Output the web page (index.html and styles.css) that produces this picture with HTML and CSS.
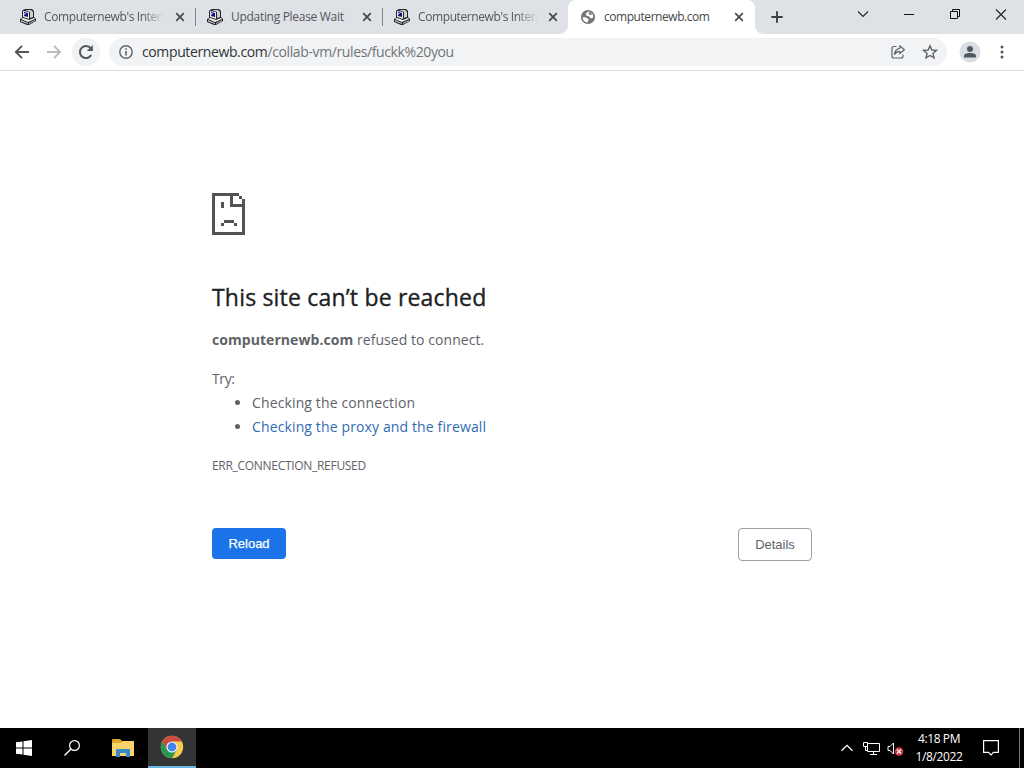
FILE: index.html
```html
<!DOCTYPE html>
<html lang="en">
<head>
<meta charset="utf-8">
<title>computernewb.com</title>
<link rel="stylesheet" href="styles.css">
</head>
<body>
<svg class="defs" aria-hidden="true">
  <symbol id="pc" viewBox="0 0 16 16">
    <path d="M3 1L5 0H12L14 2V8L16 10V12L9 16H7L0 13V10L2 9V2Z" fill="#24252c"/>
    <path d="M3 2L9 3V10L3 8Z" fill="#e9e9e6"/><path d="M4 3L8 4V8L4 7Z" fill="#16167d"/>
    <path d="M5 1H11L13 3V8L10 9V3Z" fill="#cfd0d2"/>
    <path d="M1 10L3 9L9 11L14 9L15 10L8 13Z" fill="#f4f4f0"/><path d="M1 11L8 14V15L1 12.500ZM9 14L15 11V12L9 15Z" fill="#c5c6ca"/>
    <path d="M4 4H6V5H5V6H4Z" fill="#8f91ee"/>
  </symbol>
  <symbol id="cross" viewBox="0 0 10 10"><path d="M1.200 1.200L8.800 8.800M8.800 1.200L1.200 8.800" fill="none" stroke="#45494d" stroke-width="1.700"/></symbol>
</svg>
<header class="tabs">
  <div class="tab"><svg class="fav"><use href="#pc"/></svg><span class="label fade t1">Computernewb's Intern</span><svg class="close"><use href="#cross"/></svg></div>
  <div class="tab"><svg class="fav"><use href="#pc"/></svg><span class="label t2">Updating Please Wait</span><svg class="close"><use href="#cross"/></svg></div>
  <div class="tab last"><svg class="fav"><use href="#pc"/></svg><span class="label fade t1">Computernewb's Intern</span><svg class="close"><use href="#cross"/></svg></div>
  <div class="tab active"><svg class="globe" viewBox="0 0 16 16"><circle cx="8" cy="8" r="7.100" fill="#76777a"/><path d="M2.600 8.200L5.500 8.200L8.700 10.300L7.500 13.400C4.500 13.200 2.600 11 2.600 8.200ZM8.600 2.500L5.800 4.500L6.400 6.700L9.300 7.400L10.500 9.500L13.300 8.500C13.500 5.400 11.500 2.900 8.600 2.500Z" fill="#fff"/><path d="M8.500 3.500L11 3L12 5.500L9.500 6Z" fill="#76777a"/></svg><span class="label t3">computernewb.com</span><svg class="close"><use href="#cross"/></svg></div>
  <svg class="plus" viewBox="0 0 12 12"><path d="M6 .3V11.700M.3 6H11.700" stroke="#3c4043" stroke-width="1.900"/></svg>
  <div class="window-buttons">
    <svg viewBox="0 0 46 29"><path d="M18 11.500L23 16.500L28 11.500" fill="none" stroke="#222" stroke-width="1.100"/></svg>
    <svg viewBox="0 0 46 29"><path d="M18 14.500H28" stroke="#111"/></svg>
    <svg viewBox="0 0 46 29"><path d="M18.500 11.500H25.500V18.500H18.500ZM20.500 11.500V9.500H27.500V16.500H25.500" fill="none" stroke="#111"/></svg>
    <svg viewBox="0 0 46 29"><path d="M18 9.500L28 19.500M28 9.500L18 19.500" stroke="#222" stroke-width="1.100"/></svg>
  </div>
</header>
<nav class="toolbar">
  <svg class="arrow back" viewBox="0 0 16 16"><path d="M15 8H2M8 1.800L1.800 8L8 14.200" fill="none" stroke="#54575b" stroke-width="1.900"/></svg>
  <svg class="arrow" viewBox="0 0 16 16"><path d="M1 8H14M8 1.800L14.200 8L8 14.200" fill="none" stroke="#babcbe" stroke-width="1.900"/></svg>
  <div class="reload"><svg viewBox="0 0 16 16"><path d="M13.200 11A6 6 0 1 1 12.600 4.200L14 5.600" fill="none" stroke="#54575b" stroke-width="2"/><path d="M14.800 1V7H8.800Z" fill="#54575b"/></svg></div>
  <div class="omnibox">
    <svg class="info" viewBox="0 0 16 16"><circle cx="8" cy="8" r="6.200" fill="none" stroke="#5f6368" stroke-width="1.400"/><path d="M8 7V11.500M8 4.200V5.800" stroke="#5f6368" stroke-width="1.600"/></svg>
    <span class="url"><b>computernewb.com</b>/collab-vm/rules/fuckk%20you</span>
    <svg class="share" viewBox="0 0 16 16"><path d="M6.500 2.500H4Q2 2.500 2 4.500V12Q2 14 4 14H11Q13 14 13 12V10.500" fill="none" stroke="#5f6368" stroke-width="1.200"/><path d="M9.800 1.800L14.400 5.700L9.800 9.500V7.300Q6.500 7.200 4.500 10.300Q5 5 9.800 4.300Z" fill="none" stroke="#5f6368" stroke-width="1.200" stroke-linejoin="round"/></svg>
    <svg class="star" viewBox="0 0 16 16"><path d="M8 1.800L9.800 6L14.400 6.400L10.900 9.400L12 13.900L8 11.500L4 13.900L5.100 9.400L1.600 6.400L6.200 6Z" fill="none" stroke="#5f6368" stroke-width="1.400"/></svg>
  </div>
  <svg class="person" viewBox="0 0 22 22"><circle cx="11" cy="11" r="10.500" fill="#dadde3"/><circle cx="11" cy="8" r="3" fill="#4d5a64"/><path d="M5 16.500V15C5 12.800 8 12 11 12S17 12.800 17 15V16.500Z" fill="#4d5a64"/></svg>
  <svg class="more" viewBox="0 0 4 14"><circle cx="2" cy="2" r="1.500"/><circle cx="2" cy="7" r="1.500"/><circle cx="2" cy="12" r="1.500"/></svg>
</nav>
<main class="page">
  <section class="error">
    <svg class="sad" viewBox="0 0 33 42"><path d="M0 0H27V3H30V6H33V42H0ZM3 3V39H30V14H18V3ZM21 3V11H30V6H27V3ZM9 9H12V15H9ZM12 27H22V30H25V33H22V30H12V33H9V30H12Z" fill="#535353" fill-rule="evenodd"/></svg>
    <h1>This site can’t be reached</h1>
    <p class="summary"><strong>computernewb.com</strong> refused to connect.</p>
    <p class="try">Try:</p>
    <ul><li>Checking the connection</li><li><a>Checking the proxy and the firewall</a></li></ul>
    <p class="code">ERR_CONNECTION_REFUSED</p>
    <div class="actions"><button class="primary">Reload</button><button class="details">Details</button></div>
  </section>
</main>
<footer class="taskbar">
  <div class="task"><svg width="16" height="16" viewBox="0 0 16 16"><path d="M0 2.300L6.500 1.400V7.500H0ZM7.500 1.200L16 0V7.500H7.500ZM0 8.500H6.500V14.600L0 13.700ZM7.500 8.500H16V16L7.500 14.800Z" fill="#fff"/></svg></div>
  <div class="task"><svg width="16" height="16" viewBox="0 0 16 16"><circle cx="10.500" cy="5.500" r="4.900" fill="none" stroke="#fff" stroke-width="1.200"/><path d="M7 9L.5 15.500" stroke="#fff" stroke-width="1.400"/></svg></div>
  <div class="task folder"><svg width="22" height="18" viewBox="0 0 22 18"><path d="M0 1Q0 0 1 0H8L10 2H21V17H0Z" fill="#dda52e"/><path d="M0 4H9L11 2H22V17H0Z" fill="#f7d46b"/><path d="M4 18V11Q4 10 5 10H17Q18 10 18 11V18H14V14H8V18Z" fill="#3989c9"/></svg></div>
  <div class="task chrome"><svg width="24" height="24" viewBox="0 0 24 24"><circle cx="12" cy="12" r="11.200" fill="#f5cf4c"/><path d="M2.300 6.400A11.200 11.200 0 0 1 21.700 6.400H12L7.200 14.800Z" fill="#cf4a3e"/><path d="M2.300 6.400A11.200 11.200 0 0 0 12 23.200L16.800 14.800H7.200Z" fill="#299653"/><circle cx="12" cy="12" r="5.600" fill="#f0f3f4"/><circle cx="12" cy="12" r="4.400" fill="#4385ed"/></svg></div>
  <div class="tray">
    <svg class="up" viewBox="0 0 12 8"><path d="M.5 6.800L6 1.300L11.500 6.800" fill="none" stroke="#fff" stroke-width="1.300"/></svg>
    <svg class="net" viewBox="0 0 17 15"><path d="M5 2.500H16.500V10.500H4.500V5M10.500 10.500V13.500M7 13.500H14M.5 1.500H4.500V5.500H.5ZM2.500 5.500V9.500H4.500" fill="none" stroke="#fff"/></svg>
    <svg class="sound" viewBox="0 0 17 15"><path d="M1 5.500H3L6.500 2V13L3 9.500H1Z" fill="none" stroke="#fff"/><circle cx="12" cy="10.500" r="4.300" fill="#d23a42"/><path d="M10 8.500L14 12.500M14 8.500L10 12.500" stroke="#fff" stroke-width="1.100"/></svg>
    <div class="clock"><span>4:18 PM</span><span>1/8/2022</span></div>
    <svg class="note" viewBox="0 0 16 16"><path d="M.6 .6H15.400V12.400H10.500L8 15L5.500 12.400H.6Z" fill="none" stroke="#fff" stroke-width="1.200"/></svg>
    <i class="desktop"></i>
  </div>
</footer>
</body>
</html>
```
FILE: styles.css
```css
* { box-sizing: border-box; }
body { margin: 0; width: 1024px; height: 768px; overflow: hidden; display: flex; flex-direction: column; background: #fff; font-family: "Open Sans", "Noto Sans", sans-serif; color: #5f6368; }
svg { display: block; flex: none; }
.defs { position: absolute; width: 0; height: 0; }
.tabs { height: 34px; flex: none; display: flex; background: #dee1e6; }
.tab { width: 187px; height: 34px; display: flex; align-items: center; padding-left: 20px; background: linear-gradient(#80868b, #80868b) right 8px / 1px 18px no-repeat; flex: none; }
.tab:first-child { width: 196px; }
.tab.last { width: 185px; background: none; }
.tab:nth-child(2), .tab:nth-child(3) { padding-left: 11px; }
.tab.active { width: 187px; background: #fff; padding-left: 12px; border-radius: 8px 8px 0 0; position: relative; }
.tab.active::before, .tab.active::after { content: ""; position: absolute; bottom: 0; width: 8px; height: 8px; }
.tab.active::before { left: -8px; background: radial-gradient(circle at 0 0, transparent 7.5px, #fff 8px); }
.tab.active::after { right: -8px; background: radial-gradient(circle at 100% 0, transparent 7.5px, #fff 8px); }
.fav, .globe { width: 16px; height: 16px; margin-right: 8px; }
.label { width: 120px; height: 18px; font-size: 12px; line-height: 18px; white-space: nowrap; color: #53575c; }
.fade { -webkit-mask-image: linear-gradient(90deg, #000 82%, transparent); mask-image: linear-gradient(90deg, #000 82%, transparent); }
.t1 { letter-spacing: -.4px; }
.t2 { letter-spacing: -.3px; }
.t3 { color: #45494d; letter-spacing: -.45px; }
.close { width: 10px; height: 10px; margin-left: 11px; }
.tab.last .close, .tab.active .close { margin-left: 10px; }
.plus { width: 12px; height: 12px; margin: 11px 0 0 16px; }
.window-buttons { display: flex; margin-left: auto; }
.window-buttons svg { width: 46px; height: 29px; }
.toolbar { height: 37px; flex: none; display: flex; align-items: center; border-bottom: 1px solid #dcdee0; padding-left: 14px; }
.arrow { width: 16px; height: 16px; }
.back { margin-right: 16px; }
.reload { width: 28px; height: 28px; margin-left: 10px; border-radius: 50%; background: #f1f2f3; display: grid; place-items: center; }
.reload svg { width: 16px; height: 16px; }
.omnibox { width: 838px; height: 28px; display: flex; align-items: center; margin-left: 9px; padding: 0 9px 0 9px; border-radius: 14px; background: #f1f3f4; }
.omnibox svg { width: 16px; height: 16px; }
.url { margin-left: 8px; font-size: 14px; letter-spacing: -.38px; line-height: 20px; color: #707479; white-space: nowrap; }
.url b { font-weight: 400; color: #303337; }
.share { margin-left: auto; margin-right: 16px; }
.person { width: 22px; height: 22px; margin-left: 12px; }
.more { width: 4px; height: 14px; margin-left: 19px; fill: #53575b; }
.page { height: 657px; flex: none; }
.error { width: 600px; margin: 0 auto; padding-top: 122px; font-size: 14px; line-height: 24px; }
.sad { width: 33px; height: 42px; }
.error h1 { margin: 48px 0 16px; font-size: 23px; font-weight: 500; letter-spacing: .19px; line-height: 29px; color: #202124; white-space: nowrap; -webkit-text-stroke: .35px #202124; }
.error p { margin: 0; white-space: nowrap; }
.summary { letter-spacing: .06px; }
.error .try { margin-top: 15px; letter-spacing: -.4px; }
.error ul { margin: 0; padding-left: 40px; letter-spacing: .13px; }
.error a { color: #326bb5; }
.error .code { margin-top: 15px; font-size: 12px; letter-spacing: -.3px; }
.actions { display: flex; justify-content: space-between; align-items: flex-start; margin-top: 50px; }
button { width: 74px; height: 31px; padding: 0; border: 0; border-radius: 4px; font: 13px "Liberation Sans", Arial, sans-serif; }
.primary { background: #1a73e8; color: #fff; -webkit-text-stroke: .25px #fff; }
.details { height: 33px; border: 1px solid #9aa0a6; background: #fff; color: #5f6368; }
.taskbar { height: 40px; flex: none; display: flex; background: #000; color: #fff; }
.task { width: 48px; height: 40px; display: grid; place-items: center; }
.folder { width: 52px; padding-left: 2px; }
.chrome { background: #333436; border-bottom: 2px solid #6bb4e0; }
.tray { margin-left: auto; display: flex; align-items: center; }
.up { width: 12px; height: 8px; }
.net { width: 17px; height: 15px; margin-left: 10px; }
.sound { width: 17px; height: 15px; margin-left: 7px; }
.clock { width: 70px; height: 40px; display: flex; flex-direction: column; align-items: center; font-size: 12px; line-height: 18px; padding-top: 2px; letter-spacing: -.4px; }
.note { width: 16px; height: 16px; margin-left: 9px; margin-right: 20px; }
.desktop { width: 5px; height: 40px; border-left: 1px solid #777; }
```
